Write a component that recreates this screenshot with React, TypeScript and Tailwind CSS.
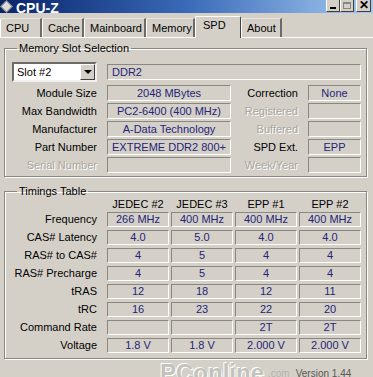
import React from 'react';

const FONT = "font-['Liberation_Sans',Arial,sans-serif]";

const TABS = [
  { name: 'CPU', w: 'w-[42px]' },
  { name: 'Cache', w: 'w-[42px]' },
  { name: 'Mainboard', w: 'w-[62px]' },
  { name: 'Memory', w: 'w-[49px]' },
  { name: 'SPD', w: 'w-[46px]', active: true },
  { name: 'About', w: 'w-[41px]' },
];

const SLOT_ROWS = [
  { label: 'Module Size', value: '2048 MBytes', rLabel: 'Correction', rValue: 'None' },
  { label: 'Max Bandwidth', value: 'PC2-6400 (400 MHz)', rLabel: 'Registered', rOff: true },
  { label: 'Manufacturer', value: 'A-Data Technology', rLabel: 'Buffered', rOff: true },
  { label: 'Part Number', value: 'EXTREME DDR2 800+', rLabel: 'SPD Ext.', rValue: 'EPP' },
  { label: 'Serial Number', off: true, rLabel: 'Week/Year', rOff: true },
];

const COLS = ['JEDEC #2', 'JEDEC #3', 'EPP #1', 'EPP #2'];

const TIMINGS: { label: string; values: string[] }[] = [
  { label: 'Frequency', values: ['266 MHz', '400 MHz', '400 MHz', '400 MHz'] },
  { label: 'CAS# Latency', values: ['4.0', '5.0', '4.0', '4.0'] },
  { label: 'RAS# to CAS#', values: ['4', '5', '4', '4'] },
  { label: 'RAS# Precharge', values: ['4', '5', '4', '4'] },
  { label: 'tRAS', values: ['12', '18', '12', '11'] },
  { label: 'tRC', values: ['16', '23', '22', '20'] },
  { label: 'Command Rate', values: ['', '', '2T', '2T'] },
  { label: 'Voltage', values: ['1.8 V', '1.8 V', '2.000 V', '2.000 V'] },
];

// sunken read-only box, the classic win32 static edit look
function Field({ children, className = '' }: { children?: React.ReactNode; className?: string }) {
  return (
    <div
      className={`flex items-center justify-center border border-t-[#8a8780] border-l-[#8a8780] border-b-white border-r-white text-[#24247a] leading-none ${className}`}
    >
      {children}
    </div>
  );
}

function Label({ children, off, className = '' }: { children: React.ReactNode; off?: boolean; className?: string }) {
  return (
    <div
      className={`text-right leading-none ${off ? 'text-[#a9a69e] [text-shadow:1px_1px_0_#ffffff]' : 'text-black'} ${className}`}
    >
      {children}
    </div>
  );
}

function GroupBox({ title, className = '', children }: { title: string; className?: string; children: React.ReactNode }) {
  return (
    <fieldset
      className={`mx-[4px] w-[363px] border border-[#8a8780] shadow-[inset_1px_1px_0_#ffffff,1px_1px_0_#ffffff] ${className}`}
    >
      <legend className="ml-[5px] px-[2px] leading-[13px] text-black">{title}</legend>
      {children}
    </fieldset>
  );
}

export default function App() {
  return (
    <div className={`w-[373px] h-[377px] overflow-hidden bg-[#d4d0c8] text-[11px] ${FONT}`}>
      {/* title bar, top edge cropped */}
      <div className="h-[13px] bg-gradient-to-r from-[#0a246a] via-[#3a6ab8] to-[#a6caf0] flex items-end overflow-hidden">
        <div className="w-[12px] h-[12px] mb-[1px] flex items-end justify-center">
          <div className="w-[9px] h-[9px] rotate-45 bg-[#dcdcdc] border border-[#7a7a7a] translate-y-[-1px]" />
        </div>
        <div className="ml-[4px] text-white font-bold text-[14px] leading-none mb-[-2px]">CPU-Z</div>
        <div className="ml-auto mr-[2px] flex items-end mb-[1px]">
          <div className="w-[14px] h-[13px] bg-[#d4d0c8] border border-t-0 border-l-white border-r-[#404040] border-b-[#404040] flex items-end justify-center pb-[2px]">
            <div className="w-[6px] h-[2px] bg-black" />
          </div>
          <div className="w-[14px] h-[13px] bg-[#d4d0c8] border border-t-0 border-l-white border-r-[#404040] border-b-[#404040] flex items-center justify-center">
            <div className="w-[8px] h-[7px] border border-t-2 border-[#8a8780]" />
          </div>
          <div className="ml-[2px] w-[15px] h-[13px] bg-[#d4d0c8] border border-t-0 border-l-white border-r-[#404040] border-b-[#404040] flex items-center justify-center text-black text-[12px] font-bold leading-none">
            ✕
          </div>
        </div>
      </div>

      {/* tab strip */}
      <div className="mt-[3px] h-[21px] flex items-end">
        {TABS.map((t) =>
          t.active ? (
            <div
              key={t.name}
              className={`${t.w} h-[22px] -mb-px relative z-10 bg-[#d4d0c8] border-l border-t border-l-white border-t-white border-r border-r-[#404040] rounded-tl-[2px] rounded-tr-[2px] pl-[7px] pt-[3px] leading-none text-black`}
            >
              {t.name}
            </div>
          ) : (
            <div
              key={t.name}
              className={`${t.w} h-[19px] border-l border-t border-l-white border-t-[#e8e6e0] border-r-2 border-r-[#6e6b66] rounded-tl-[2px] pl-[5px] pt-[4px] leading-none text-black`}
            >
              {t.name}
            </div>
          )
        )}
      </div>

      {/* page */}
      <div className="border-t border-white pt-[4px]">
        <GroupBox title="Memory Slot Selection" className="pl-[7px] pt-[7px] pb-[3px]">
          <div className="flex items-center">
            <div className="w-[85px] h-[20px] bg-white border-2 border-t-[#6e6b66] border-l-[#6e6b66] border-b-[#f0f0f0] border-r-[#f0f0f0] flex items-center">
              <span className="pl-[3px] text-black leading-none">Slot #2</span>
              <div className="ml-auto w-[15px] h-[16px] bg-[#d4d0c8] border border-t-white border-l-white border-b-[#404040] border-r-[#404040] flex items-center justify-center">
                <div className="w-0 h-0 border-l-[4px] border-r-[4px] border-t-[4px] border-l-transparent border-r-transparent border-t-black" />
              </div>
            </div>
            <Field className="ml-[10px] w-[254px] h-[16px] !justify-start pl-[4px]">DDR2</Field>
          </div>

          <div className="mt-[3px] flex flex-col gap-[2px]">
            {SLOT_ROWS.map((r) => (
              <div key={r.label} className="flex items-center h-[16px]">
                <Label off={r.off} className="w-[85px]">{r.label}</Label>
                <Field className="ml-[10px] w-[124px] h-[16px]">{r.value}</Field>
                <Label off={r.rOff} className="w-[67px]">{r.rLabel}</Label>
                <Field className="ml-[10px] w-[53px] h-[16px]">{r.rValue}</Field>
              </div>
            ))}
          </div>
        </GroupBox>

        <GroupBox title="Timings Table" className="mt-[8px] pl-[7px] pb-[5px]">
          <div className="flex items-center h-[13px]">
            <div className="w-[85px]" />
            <div className="ml-[10px] grid grid-cols-[62px_62px_62px_62px] gap-x-[2px]">
              {COLS.map((c) => (
                <div key={c} className="text-center text-black leading-none">
                  {c}
                </div>
              ))}
            </div>
          </div>
          <div className="mt-[1px] flex flex-col gap-[3px]">
            {TIMINGS.map((row) => (
              <div key={row.label} className="flex items-center h-[15px]">
                <Label className="w-[85px]">{row.label}</Label>
                <div className="ml-[10px] grid grid-cols-[62px_62px_62px_62px] gap-x-[2px]">
                  {row.values.map((v, i) => (
                    <Field key={i} className="h-[15px]">{v}</Field>
                  ))}
                </div>
              </div>
            ))}
          </div>
        </GroupBox>

        {/* watermark strip at the bottom of the capture */}
        <div className="flex items-start pl-[160px] pt-[2px] h-[24px]">
          <span className="text-[24px] font-bold leading-[24px] text-[#c4c2bd] [text-shadow:1px_1px_0_#ffffff,-1px_-1px_0_#ffffff]">
            PConline
          </span>
          <span className="ml-[4px] mt-[8px] text-[10px] leading-none text-[#b5b3ad]">.com</span>
          <span className="ml-[6px] mt-[8px] text-[10px] leading-none text-[#5a5852]">Version 1.44</span>
        </div>
      </div>
    </div>
  );
}
